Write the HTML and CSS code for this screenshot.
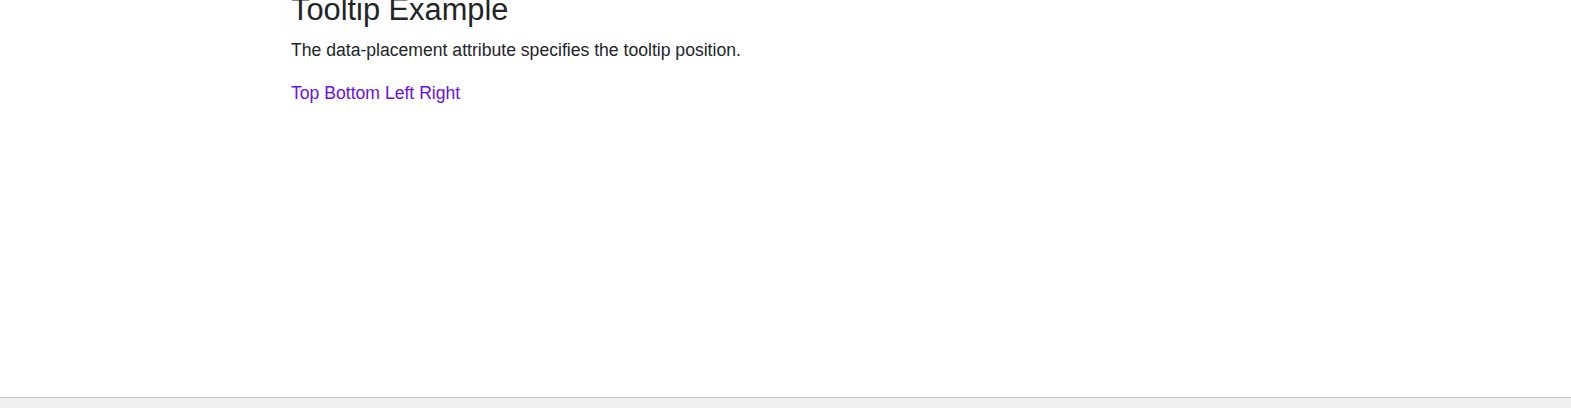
FILE: index.html
```html
<!DOCTYPE html>
<html>
<head>
<meta charset="utf-8">
<link rel="stylesheet" href="styles.css">
</head>
<body>
<div class="viewport">
  <div class="container">
    <h3 class="title">Tooltip Example</h3>
    <p class="lead">The data-placement attribute specifies the tooltip position.</p>
    <div class="links">
      <a href="#" class="tip">Top</a>
      <a href="#" class="tip">Bottom</a>
      <a href="#" class="tip">Left</a>
      <a href="#" class="tip">Right</a>
    </div>
  </div>
</div>
<div class="bottombar"></div>
</body>
</html>
```
FILE: styles.css
```css
html, body {
  margin: 0;
  padding: 0;
  background: #fff;
}
body {
  font-family: "Liberation Sans", Arial, sans-serif;
  font-size: 17.6px;
  line-height: 1.5;
  color: #212529;
  height: 408px;
  display: flex;
  flex-direction: column;
  overflow: hidden;
}
.viewport {
  flex: 1;
  overflow: hidden;
}
.container {
  padding-left: 291px;
  margin-top: -8px;
}
.title {
  font-size: 30.8px;
  font-weight: 400;
  line-height: 1.2;
  margin: 0 0 8px;
}
.lead {
  margin: 0 0 16.6px;
}
.tip {
  color: #6610f2;
  text-decoration: none;
}
.bottombar {
  flex: 0 0 auto;
  height: 10px;
  border-top: 1px solid #c6c6c6;
  background: #efefef;
}
```
